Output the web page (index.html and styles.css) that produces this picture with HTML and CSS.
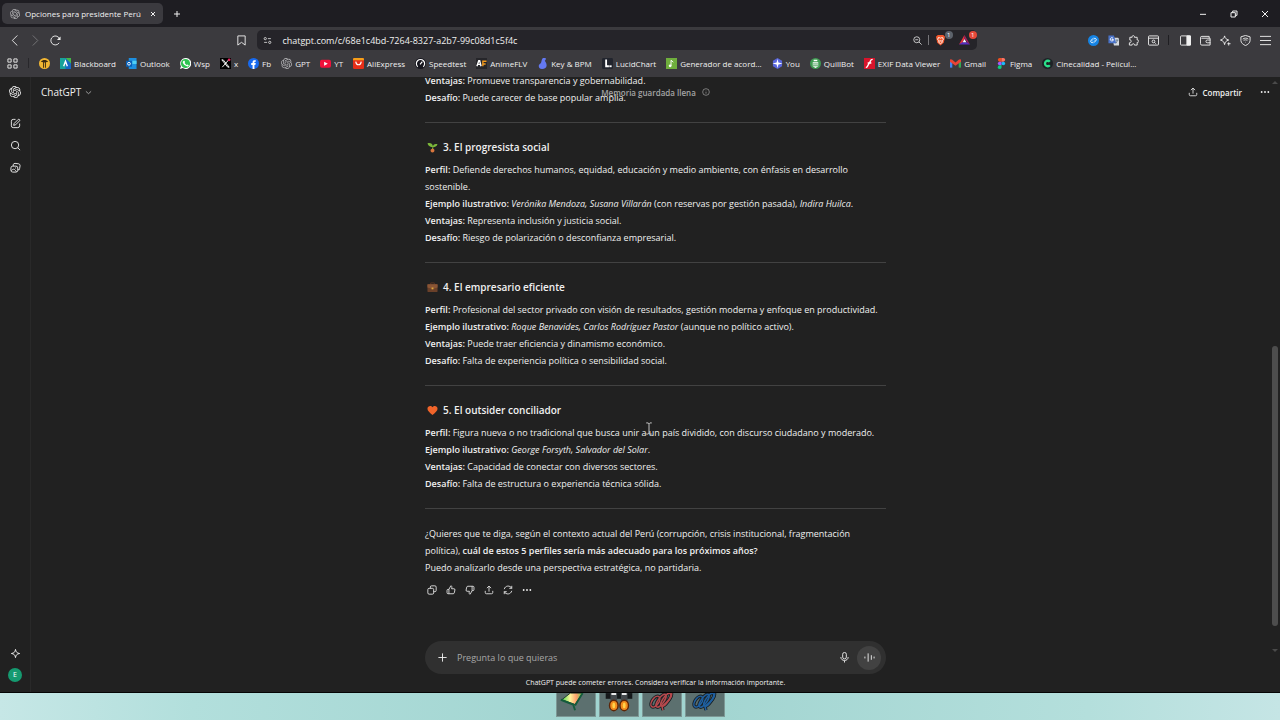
FILE: index.html
```html
<!DOCTYPE html>
<html lang="es">
<head>
    <meta charset="UTF-8">
    <meta name="viewport" content="width=device-width, initial-scale=1.0">
    <title>Opciones para presidente Perú</title>
    <link rel="stylesheet" href="styles.css">
</head>
<body>
    <svg class="defs" aria-hidden="true">
        <symbol id="gpt" viewBox="0 0 24 24">
            <path fill="currentColor" d="M22.2819 9.8211a5.9847 5.9847 0 0 0-.5157-4.9108 6.0462 6.0462 0 0 0-6.5098-2.9A6.0651 6.0651 0 0 0 4.9807 4.1818a5.9847 5.9847 0 0 0-3.9977 2.9 6.0462 6.0462 0 0 0 .7427 7.0966 5.98 5.98 0 0 0 .511 4.9107 6.051 6.051 0 0 0 6.5146 2.9001A5.9847 5.9847 0 0 0 13.2599 24a6.0557 6.0557 0 0 0 5.7718-4.2058 5.9894 5.9894 0 0 0 3.9977-2.9001 6.0557 6.0557 0 0 0-.7475-7.0729zm-9.022 12.6081a4.4755 4.4755 0 0 1-2.8764-1.0408l.1419-.0804 4.7783-2.7582a.7948.7948 0 0 0 .3927-.6813v-6.7369l2.02 1.1686a.071.071 0 0 1 .038.052v5.5826a4.504 4.504 0 0 1-4.4945 4.4944zm-9.6607-4.1254a4.4708 4.4708 0 0 1-.5346-3.0137l.142.0852 4.783 2.7582a.7712.7712 0 0 0 .7806 0l5.8428-3.3685v2.3324a.0804.0804 0 0 1-.0332.0615L9.74 19.9502a4.4992 4.4992 0 0 1-6.1408-1.6464zM2.3408 7.8956a4.485 4.485 0 0 1 2.3655-1.9728V11.6a.7664.7664 0 0 0 .3879.6765l5.8144 3.3543-2.0201 1.1685a.0757.0757 0 0 1-.071 0l-4.8303-2.7865A4.504 4.504 0 0 1 2.3408 7.872zm16.5963 3.8558L13.1038 8.364 15.1192 7.2a.0757.0757 0 0 1 .071 0l4.8303 2.7913a4.4944 4.4944 0 0 1-.6765 8.1042v-5.6772a.79.79 0 0 0-.407-.667zm2.0107-3.0231l-.142-.0852-4.7735-2.7818a.7759.7759 0 0 0-.7854 0L9.409 9.2297V6.8974a.0662.0662 0 0 1 .0284-.0615l4.8303-2.7866a4.4992 4.4992 0 0 1 6.6802 4.66zM8.3065 12.863l-2.02-1.1638a.0804.0804 0 0 1-.038-.0567V6.0742a4.4992 4.4992 0 0 1 7.3757-3.4537l-.142.0805L8.704 5.459a.7948.7948 0 0 0-.3927.6813zm1.0976-2.3654l2.602-1.4998 2.6069 1.4998v2.9994l-2.5974 1.4997-2.6067-1.4997Z"/>
        </symbol>
        <symbol id="share" viewBox="0 0 24 24">
            <path d="M12 16V3M7 7.500l5-5 5 5M3 14v4a3 3 0 0 0 3 3h12a3 3 0 0 0 3-3v-4"/>
        </symbol>
        <symbol id="dots" viewBox="0 0 24 24">
            <g fill="currentColor" stroke="none"><circle cx="4" cy="12" r="2.200"/><circle cx="12" cy="12" r="2.200"/><circle cx="20" cy="12" r="2.200"/></g>
        </symbol>
        <symbol id="thumb" viewBox="0 0 24 24">
            <path d="M7 10.500 11.500 2c2 .2 3 1.500 2.600 3.500L13.400 9H19a2.500 2.500 0 0 1 2.400 3l-1.600 7a2.800 2.800 0 0 1-2.700 2H5a2.500 2.500 0 0 1-2.500-2.500V13A2.500 2.500 0 0 1 5 10.500zM7 10.500V21"/>
        </symbol>
        <symbol id="spring" viewBox="0 0 30 24">
            <g fill="none" stroke="#1b2226" stroke-width="3.500">
                <ellipse cx="8" cy="9" rx="3.500" ry="6.500" transform="rotate(35 8 9)"/>
                <ellipse cx="14" cy="8" rx="3" ry="8" transform="rotate(35 14 8)"/>
                <ellipse cx="19" cy="7" rx="3" ry="8" transform="rotate(35 19 7)"/>
                <path d="M25 0c1 4-3 8-10 14l1 4"/>
            </g>
            <g fill="none" stroke="currentColor" stroke-width="1.600">
                <ellipse cx="8" cy="9" rx="3.500" ry="6.500" transform="rotate(35 8 9)"/>
                <ellipse cx="14" cy="8" rx="3" ry="8" transform="rotate(35 14 8)"/>
                <ellipse cx="19" cy="7" rx="3" ry="8" transform="rotate(35 19 7)"/>
                <path d="M25 0c1 4-3 8-10 14l1 4"/>
            </g>
        </symbol>
    </svg>

    <div class="window">
        <div class="tabs">
            <div class="tab">
                <svg class="tab-icon"><use href="#gpt"/></svg>
                <span class="tab-title">Opciones para presidente Perú</span>
                <button class="tab-close" aria-label="Cerrar pestaña"><svg viewBox="0 0 24 24"><path d="M4 4l16 16M20 4 4 20"/></svg></button>
            </div>
            <button class="new-tab" aria-label="Nueva pestaña"><svg viewBox="0 0 24 24"><path d="M12 3v18M3 12h18"/></svg></button>
            <div class="caption">
                <button aria-label="Minimizar"><svg viewBox="0 0 24 24"><path d="M3 13h18"/></svg></button>
                <button aria-label="Restaurar"><svg viewBox="0 0 24 24"><path d="M3 8h13v13H3zM8 8V3h13v13h-5"/></svg></button>
                <button aria-label="Cerrar"><svg viewBox="0 0 24 24"><path d="M3 3l18 18M21 3 3 21"/></svg></button>
            </div>
        </div>

        <div class="toolbar">
            <button aria-label="Atrás"><svg viewBox="0 0 24 24"><path d="M16 1 5 12l11 11"/></svg></button>
            <button class="off" aria-label="Adelante"><svg viewBox="0 0 24 24"><path d="M6 1l11 11L6 23"/></svg></button>
            <button aria-label="Recargar"><svg viewBox="0 0 24 24"><path d="M20 17a9.800 9.800 0 1 1 1-8"/><path d="M23 3v8h-8z" fill="currentColor" stroke="none"/></svg></button>
            <div class="space-left"></div>
            <button aria-label="Marcador"><svg viewBox="0 0 24 24"><path d="M4 2h16v20l-8-6-8 6z"/></svg></button>
            <div class="address">
                <button aria-label="Información del sitio"><svg viewBox="0 0 24 24"><circle cx="6" cy="7" r="3"/><circle cx="18" cy="17" r="3"/><path d="M13 7h8M3 17h8"/></svg></button>
                <input type="text" aria-label="Dirección" value="chatgpt.com/c/68e1c4bd-7264-8327-a2b7-99c08d1c5f4c">
                <button aria-label="Zoom"><svg viewBox="0 0 24 24"><circle cx="10" cy="10" r="8"/><path d="M16 16l7 7M6 10h8"/></svg></button>
                <i class="bar"></i>
                <button aria-label="Brave Shields">
                    <svg class="big" viewBox="0 0 24 24"><path stroke="none" fill="#f1562b" d="M6 1h12l4 4-1 5-2 8-7 6-7-6L3 10 2 5z"/><path stroke="#fff" d="M7 7h3l2 1 2-1h3l1 4-3 3 1 3-4 3-4-3 1-3-3-3zM10 14h4"/></svg>
                    <span class="badge gray">1</span>
                </button>
                <button aria-label="Brave Rewards">
                    <svg class="big" viewBox="0 0 24 24"><g stroke="none"><path fill="#e8323c" d="M12 1 0 22l7-4 5-9z"/><path fill="#5a2dc0" d="M0 22h24l-6-5H7z"/><path fill="#9e1f63" d="m12 1 12 21-6-5-6-8z"/><path fill="#fff" d="m12 10 4 7H8z"/></g></svg>
                    <span class="badge">1</span>
                </button>
            </div>
            <div class="space-right"></div>
            <button aria-label="Shazam"><svg viewBox="0 0 24 24"><circle cx="12" cy="12" r="12" fill="#1583e3" stroke="none"/><path stroke="#fff" d="M11 16c-2 2-6 0-5-3 0-2 4-4 6-6M13 8c2-2 6 0 5 3 0 2-4 4-6 6M9 12l2 2M13 10l2 2"/></svg></button>
            <button aria-label="Traductor"><svg viewBox="0 0 24 24"><g stroke="none"><path fill="#d5d9de" d="M9 6h13l2 2v15H13z"/><path fill="#4a73c9" d="M1 1h12l5 17H1z"/></g><path stroke="#fff" d="M11 7a3.500 3.500 0 1 0 1 3H8"/><path stroke="#5b7286" d="M17 11h6M20 11c0 3-1 5-3 7"/></svg></button>
            <button aria-label="Extensiones"><svg viewBox="0 0 24 24"><path d="M4 5h5c-1-5 6-5 5 0h6v6c5-1 5 6 0 5v6h-6c1-4-6-4-5 0H3v-5c5 1 5-7 1-6z"/></svg></button>
            <button aria-label="Buscar en la página"><svg viewBox="0 0 24 24"><rect x="1" y="2" width="22" height="20" rx="2"/><path d="M1 7h22"/><circle cx="12" cy="14" r="3"/><path d="m14 16 3 3"/></svg></button>
            <i class="bar wide"></i>
            <button aria-label="Barra lateral"><svg viewBox="0 0 24 24"><rect x="1" y="2" width="22" height="20" rx="2"/><path d="M15 2h8v20h-8z" fill="currentColor"/></svg></button>
            <button aria-label="Cartera"><svg viewBox="0 0 24 24"><path d="M20 7V3H4a3 3 0 0 0-3 3v13a3 3 0 0 0 3 3h18V7H3M23 11h-7a3 3 0 0 0 0 6h7"/></svg></button>
            <button aria-label="Leo"><svg viewBox="0 0 24 24"><path d="M10 2c1 5 3 7 9 9-6 2-8 4-9 10-1-6-3-8-9-10 6-2 8-4 9-9z"/><path d="M19 16v7M16 19h7"/></svg></button>
            <button aria-label="VPN"><svg viewBox="0 0 24 24"><path d="M12 1 2 4v8c0 5 5 9 10 11 5-2 10-6 10-11V4zM6 9c4-3 8-3 12 0M8 12c3-2 5-2 8 0M12 15v1"/></svg></button>
            <button aria-label="Menú"><svg viewBox="0 0 24 24"><path d="M0 3h24M0 12h24M0 21h24"/></svg></button>
        </div>

        <nav class="bookmarks">
            <button class="apps" aria-label="Aplicaciones"><svg viewBox="0 0 24 24"><path d="M2 2h7v7H2zM15 2h7v7h-7zM2 15h7v7H2zM15 15h7v7h-7z"/></svg></button>
            <i class="bar"></i>
            <a href="#" aria-label="Marcador"><svg viewBox="0 0 24 24"><circle cx="12" cy="12" r="12" fill="#f2b632"/><path fill="#3a2a12" d="M4 8c4-5 12-5 16 0l-5 1v12h-2V10h-2v11H9V9z"/></svg></a>
            <a href="#"><svg viewBox="0 0 24 24"><path fill="#1568c4" d="M0 0h24v24H0z"/><path fill="#43b649" d="M0 0h24v12L12 0z"/><path fill="#17a39a" d="M0 0h12v24H0z"/><path fill="none" stroke="#fff" stroke-width="3" d="m8 18 4-11 4 11"/></svg>Blackboard</a>
            <a href="#"><svg viewBox="0 0 24 24"><path fill="#1d8fe0" d="M6 0h17v24H6z"/><path fill="#50d0f5" d="M14 6h9v7h-9z"/><path fill="#0a5fb4" d="M0 6h13v13H0z"/><circle cx="6.500" cy="12.500" r="3" fill="none" stroke="#fff" stroke-width="2"/></svg>Outlook</a>
            <a href="#"><svg viewBox="0 0 24 24"><path fill="#fff" d="M12 0a12 12 0 1 1-6 22l-6 2 2-6A12 12 0 0 1 12 0z"/><circle cx="12" cy="12" r="10" fill="#2fc351"/><path fill="#fff" d="m8 6 2 0 1 3-1 2 4 4 2-1 3 2c0 2-2 3-4 2-5-1-8-5-9-8 0-2 1-3 2-4z"/></svg>Wsp</a>
            <a href="#"><svg viewBox="0 0 24 24"><path fill="#000" d="M0 0h24v24H0z"/><path fill="none" stroke="#fff" stroke-width="2" d="M4 4h3l13 16h-3zM19 4 5 20"/><circle cx="20" cy="4" r="3" fill="#e0245e"/></svg>x</a>
            <a href="#"><svg viewBox="0 0 24 24"><circle cx="12" cy="12" r="12" fill="#1769ee"/><path fill="#fff" d="M10 24v-9H7v-4h3V9c0-4 3-5 7-4v3c-3 0-3 0-3 3h3l-1 4h-2v9z"/></svg>Fb</a>
            <a href="#"><svg class="dim"><use href="#gpt"/></svg>GPT</a>
            <a href="#"><svg viewBox="0 0 24 24"><rect y="4" width="24" height="17" rx="4" fill="#f0113b"/><path fill="#fff" d="m9 8 8 4.500L9 17z"/></svg>YT</a>
            <a href="#"><svg viewBox="0 0 24 24"><rect width="24" height="24" rx="3" fill="#e62e18"/><path fill="#f6a01a" d="M0 3a3 3 0 0 1 3-3h18a3 3 0 0 1 3 3v2H0z"/><path fill="none" stroke="#fff" stroke-width="2.500" d="M6 8c1 9 11 9 12 0"/></svg>AliExpress</a>
            <a href="#"><svg viewBox="0 0 24 24"><circle cx="12" cy="12" r="12" fill="#17171f"/><path fill="none" stroke="#fff" stroke-width="2.500" d="M6 19a9 9 0 1 1 12 0M11 14l5-6"/></svg>Speedtest</a>
            <a href="#"><svg viewBox="0 0 24 24"><path fill="#26262a" d="M0 0h24v24H0z"/><path fill="none" stroke="#fff" stroke-width="3" d="m2 18 4-12h2l3 12M4 14h6"/><path fill="none" stroke="#f39a1e" stroke-width="3" d="M15 18V7h8M15 13h6"/></svg>AnimeFLV</a>
            <a href="#"><svg viewBox="0 0 24 24"><path fill="#6479f2" d="M13 0h6v4l-2 2c1 2 4 5 4 10 0 6-4 8-10 8-5 0-8-3-7-8 1-3 4-3 5-6s1-7 4-10z"/></svg>Key &amp; BPM</a>
            <a href="#"><svg viewBox="0 0 24 24"><rect width="24" height="24" rx="3" fill="#22252e"/><path fill="none" stroke="#fff" stroke-width="4" d="M9 3v15h6"/><path fill="#fff" d="M16 16h5v4h-5z"/></svg>LucidChart</a>
            <a href="#"><svg viewBox="0 0 24 24"><path fill="#6fae3d" d="M0 0h24v24H0z"/><circle cx="9" cy="17" r="3" fill="#fff"/><path fill="none" stroke="#fff" stroke-width="2" d="M11 17V5l5 4"/></svg>Generador de acord...</a>
            <a href="#"><svg viewBox="0 0 24 24"><path fill="#5a67dc" d="m12 0 10 6v12l-10 6-10-6V6z"/><path fill="#fff" d="m12 2 2 8 9 2-9 2-2 8-2-8-9-2 9-2z"/></svg>You</a>
            <a href="#"><svg viewBox="0 0 24 24"><circle cx="12" cy="12" r="12" fill="#3f9b52"/><path fill="#fff" d="M6 9h12v9l-6 4-6-4zM8 4h8v3H8z"/><path stroke="#3f9b52" stroke-width="2" d="M6 13h12M6 17h12"/></svg>QuillBot</a>
            <a href="#"><svg viewBox="0 0 24 24"><path fill="#d9142b" d="M0 0h24v24H0z"/><path fill="none" stroke="#fff" stroke-width="3" d="M19 3c-6 0-4 4-8 9s-2 8-7 9M8 11h8"/></svg>EXIF Data Viewer</a>
            <a href="#"><svg viewBox="0 0 24 24"><path fill="#4285f4" d="M0 5h5v16H0z"/><path fill="#34a853" d="M19 5h5v16h-5z"/><path fill="#ea4335" d="M0 5c0-3 3-3 5-1l7 6 7-6c2-2 5-2 5 1v3l-12 9L0 8z"/></svg>Gmail</a>
            <a href="#"><svg viewBox="0 0 24 24"><path fill="#f24e1e" d="M12 0v8H8a4 4 0 0 1 0-8z"/><path fill="#ff7262" d="M12 0h4a4 4 0 0 1 0 8h-4z"/><path fill="#a259ff" d="M12 8v8H8a4 4 0 0 1 0-8z"/><circle cx="16" cy="12" r="4" fill="#1abcfe"/><path fill="#0acf83" d="M8 16h4v4a4 4 0 1 1-4-4z"/></svg>Figma</a>
            <a href="#"><svg viewBox="0 0 24 24"><circle cx="12" cy="12" r="12" fill="#1d2226"/><path fill="none" stroke="#2be08a" stroke-width="5" d="M17 8a6 6 0 1 0 0 8"/></svg>Cinecalidad - Películ...</a>
        </nav>

        <div class="page">
            <aside class="sidebar">
                <button class="logo" aria-label="Inicio"><svg><use href="#gpt"/></svg></button>
                <button aria-label="Nuevo chat"><svg viewBox="0 0 24 24"><path d="M12 3H7a4 4 0 0 0-4 4v10a4 4 0 0 0 4 4h10a4 4 0 0 0 4-4v-5M9 12l9-9c2-1 4 1 3 3l-9 9-4 1z"/></svg></button>
                <button aria-label="Buscar chats"><svg viewBox="0 0 24 24"><circle cx="11" cy="11" r="8"/><path d="m17 17 5 5"/></svg></button>
                <button aria-label="Biblioteca"><svg viewBox="0 0 24 24"><rect x="2" y="9" width="15" height="13" rx="4"/><path d="M7 9V6a4 4 0 0 1 4-3l8 1a4 4 0 0 1 3 4l-1 6a3 3 0 0 1-4 3M3 19c4-5 7-4 11 2M11 13h2"/></svg></button>
                <button class="upgrade" aria-label="Mejorar plan"><svg viewBox="0 0 24 24"><path d="M12 3c1 6 3 8 9 9-6 1-8 3-9 9-1-6-3-8-9-9 6-1 8-3 9-9z"/></svg></button>
                <button aria-label="Perfil"><span class="avatar">E</span></button>
            </aside>

            <main>
                <header>
                    <button class="model">ChatGPT <svg viewBox="0 0 24 24"><path d="m3 8 9 8 9-8"/></svg></button>
                    <div class="memory">Memoria guardada llena <svg viewBox="0 0 24 24"><circle cx="12" cy="12" r="10"/><path d="M12 11v6M12 7v1"/></svg></div>
                    <div class="header-actions">
                        <button class="share"><svg><use href="#share"/></svg>Compartir</button>
                        <button aria-label="Más opciones"><svg><use href="#dots"/></svg></button>
                    </div>
                </header>

                <div class="thread">
                    <article>
                        <p><strong>Ventajas:</strong> Promueve transparencia y gobernabilidad.<br>
                        <strong>Desafío:</strong> Puede carecer de base popular amplia.</p>
                        <hr>
                        <h3><svg viewBox="0 0 24 24"><path fill="#7cb83a" d="M12 11C8 11 3 9 1 3c6-2 11 1 12 6 1-4 5-6 10-4-2 5-6 6-9 6l-1 7h-3z"/><path fill="#d9763d" d="M8 17c2-3 7-3 8 0s-1 6-4 6-5-3-4-6z"/></svg>3. El progresista social</h3>
                        <p><strong>Perfil:</strong> Defiende derechos humanos, equidad, educación y medio ambiente, con énfasis en desarrollo sostenible.<br>
                        <strong>Ejemplo ilustrativo:</strong> <em>Verónika Mendoza, Susana Villarán</em> (con reservas por gestión pasada), <em>Indira Huilca</em>.<br>
                        <strong>Ventajas:</strong> Representa inclusión y justicia social.<br>
                        <strong>Desafío:</strong> Riesgo de polarización o desconfianza empresarial.</p>
                        <hr>
                        <h3><svg viewBox="0 0 24 24"><path fill="none" stroke="#5a3524" stroke-width="2" d="M8 6V2h8v4"/><rect x="1" y="5" width="22" height="17" rx="2" fill="#6a4029"/><path fill="#8a5535" d="M1 5h22v7l-11 3-11-3z"/><path fill="#e0a93a" d="M10 12h4v4h-4z"/></svg>4. El empresario eficiente</h3>
                        <p><strong>Perfil:</strong> Profesional del sector privado con visión de resultados, gestión moderna y enfoque en productividad.<br>
                        <strong>Ejemplo ilustrativo:</strong> <em>Roque Benavides, Carlos Rodríguez Pastor</em> (aunque no político activo).<br>
                        <strong>Ventajas:</strong> Puede traer eficiencia y dinamismo económico.<br>
                        <strong>Desafío:</strong> Falta de experiencia política o sensibilidad social.</p>
                        <hr>
                        <h3><svg viewBox="0 0 24 24"><path fill="#f0642a" d="M12 22C5 16 1 12 1 8c0-6 8-8 11-3 3-5 11-3 11 3 0 4-4 8-11 14z"/></svg>5. El outsider conciliador</h3>
                        <p><strong>Perfil:</strong> Figura nueva o no tradicional que busca unir a un país dividido, con discurso ciudadano y moderado.<br>
                        <strong>Ejemplo ilustrativo:</strong> <em>George Forsyth, Salvador del Solar</em>.<br>
                        <strong>Ventajas:</strong> Capacidad de conectar con diversos sectores.<br>
                        <strong>Desafío:</strong> Falta de estructura o experiencia técnica sólida.</p>
                        <hr>
                        <p>¿Quieres que te diga, según el contexto actual del Perú (corrupción, crisis institucional, fragmentación política), <strong>cuál de estos 5 perfiles sería más adecuado para los próximos años?</strong><br>
                        Puedo analizarlo desde una perspectiva estratégica, no partidaria.</p>
                        <div class="actions">
                            <button aria-label="Copiar"><svg viewBox="0 0 24 24"><rect x="2" y="8" width="14" height="14" rx="3"/><path d="M8 8V5a3 3 0 0 1 3-3h8a3 3 0 0 1 3 3v8a3 3 0 0 1-3 3h-3"/></svg></button>
                            <button aria-label="Buena respuesta"><svg><use href="#thumb"/></svg></button>
                            <button class="down" aria-label="Mala respuesta"><svg><use href="#thumb"/></svg></button>
                            <button aria-label="Compartir"><svg><use href="#share"/></svg></button>
                            <button aria-label="Reintentar"><svg viewBox="0 0 24 24"><path d="M3 10c2-9 14-10 18-2M21 2v6h-6M21 14c-2 9-14 10-18 2M3 22v-6h6"/></svg></button>
                            <button aria-label="Más"><svg><use href="#dots"/></svg></button>
                        </div>
                    </article>
                </div>

                <form class="composer">
                    <button type="button" aria-label="Agregar"><svg viewBox="0 0 24 24"><path d="M12 3v18M3 12h18"/></svg></button>
                    <input type="text" aria-label="Mensaje" placeholder="Pregunta lo que quieras">
                    <button type="button" aria-label="Dictar"><svg viewBox="0 0 24 24"><rect x="8" y="1" width="8" height="14" rx="4"/><path d="M4 11c0 10 16 10 16 0M12 19v4"/></svg></button>
                    <button type="button" class="voice" aria-label="Modo de voz"><svg viewBox="0 0 24 24"><path d="M2 10v4M9 3v18M16 7v10M22 10v4"/></svg></button>
                </form>
                <p class="note">ChatGPT puede cometer errores. Considera verificar la información importante.</p>

                <div class="scrollbar">
                    <i class="arrow up"></i>
                    <i class="handle"></i>
                    <i class="arrow"></i>
                </div>
                <svg class="cursor" viewBox="0 0 8 14"><path d="M1 1h2l1 1 1-1h2M4 2v10M1 13h2l1-1 1 1h2"/></svg>
            </main>
        </div>
    </div>

    <!-- juego detrás de la ventana -->
    <div class="desktop">
        <div class="slot"><svg viewBox="0 0 40 24">
            <defs><linearGradient id="kite"><stop offset="0" stop-color="#3fdc4a"/><stop offset="0.400" stop-color="#fff59a"/><stop offset="0.700" stop-color="#ff9e6b"/><stop offset="1" stop-color="#58d64c"/></linearGradient></defs>
            <path fill="url(#kite)" stroke="#20352d" stroke-width="1" d="M14 0h13l-8 12-14-5z"/>
            <path fill="none" stroke="#155c3c" stroke-width="2" d="M4 7l13 5 2 6M27 0l-8 13"/>
        </svg></div>
        <div class="slot"><svg viewBox="0 0 40 24">
            <path fill="#15181a" d="M6 0h28v6H6z"/><path fill="#42474a" d="M11 0h7v8h-7zM22 0h7v8h-7z"/><path fill="#e8e8e8" d="M12 0h5v2h-5zM23 0h5v2h-5z"/>
            <g fill="#f28b1c" stroke="#5c2508" stroke-width="1.500"><ellipse cx="14.500" cy="13" rx="4.500" ry="5.500"/><ellipse cx="25.500" cy="13" rx="4.500" ry="5.500"/></g>
            <g fill="#ffd34a"><ellipse cx="14.500" cy="13" rx="1.500" ry="3"/><ellipse cx="25.500" cy="13" rx="1.500" ry="3"/></g>
        </svg></div>
        <div class="slot red"><svg viewBox="-5 0 40 24"><use href="#spring" width="30" height="24"/></svg></div>
        <div class="slot blue"><svg viewBox="-5 0 40 24"><use href="#spring" width="30" height="24"/></svg></div>
    </div>
</body>
</html>
```
FILE: styles.css
```css
* {
    box-sizing: border-box;
}
body {
    font-family: "Segoe UI", "Open Sans", "Noto Sans", sans-serif;
    font-size: 9px;
    color: #f0f0f0;
    background: linear-gradient(90deg, #c6e7e6, #b2dfdc 15%, #9fd3cf 50%, #b4dfdc 85%, #c5e5e5);
    margin: 0;
    height: 100vh;
    display: flex;
    flex-direction: column;
    overflow: hidden;
}
svg {
    display: block;
    flex: none;
    width: 11px;
    height: 11px;
    fill: none;
}
button {
    display: flex;
    align-items: center;
    justify-content: center;
    flex: none;
    padding: 0;
    border: none;
    background: none;
    color: inherit;
    font: inherit;
    cursor: pointer;
}
button svg, .memory svg {
    stroke: currentColor;
    stroke-width: 2;
}
input {
    flex: 1;
    min-width: 0;
    padding: 0;
    border: none;
    outline: none;
    background: none;
    color: inherit;
    font: inherit;
}
.defs {
    position: absolute;
    width: 0;
    height: 0;
}
.window {
    flex: 1;
    min-height: 0;
    display: flex;
    flex-direction: column;
    background: #212121;
    border-bottom: 1px solid #050505;
}

/* browser */
.tabs {
    display: flex;
    align-items: center;
    height: 27px;
    padding-left: 2px;
    background: #1e1d22;
}
.tab {
    display: flex;
    align-items: center;
    width: 161px;
    height: 21px;
    padding: 0 4px 0 8px;
    gap: 5px;
    border-radius: 5px;
    background: #3b3a3f;
    font-size: 8px;
}
.tab-icon {
    width: 10px;
    height: 10px;
    color: #b5b5b8;
}
.tab-title {
    flex: 1;
    white-space: nowrap;
}
.tab-close {
    width: 13px;
    height: 13px;
}
.tab-close svg {
    width: 6px;
    height: 6px;
    stroke-width: 4;
}
.new-tab {
    width: 28px;
    height: 20px;
}
.new-tab svg {
    width: 8px;
    height: 8px;
    stroke-width: 3;
}
.caption {
    display: flex;
    margin-left: auto;
}
.caption button {
    width: 31px;
    height: 26px;
}
.caption svg {
    width: 8px;
    height: 8px;
    stroke-width: 3;
}
.toolbar {
    display: flex;
    align-items: center;
    height: 26px;
    padding: 0 5px;
    background: #3b3a3e;
}
.toolbar button {
    position: relative;
    width: 20px;
    height: 20px;
}
.toolbar .off {
    color: #78777b;
}
.space-left {
    width: 13vw;
}
.space-right {
    width: 8vw;
}
.address {
    flex: 1;
    display: flex;
    align-items: center;
    height: 20px;
    margin: 0 4px 0 6px;
    border-radius: 5px;
    background: #252429;
}
.address input {
    margin-left: 5px;
}
.toolbar .address svg {
    width: 9px;
    height: 9px;
}
.toolbar .address .big {
    width: 11px;
    height: 12px;
}
.address button:nth-last-child(-n+2) {
    width: 24px;
}
.bar {
    width: 1px;
    height: 10px;
    background: #77767a;
}
.bar.wide {
    margin: 0 6px 0 5px;
    background: #1f1e22;
}
.badge {
    position: absolute;
    top: 1px;
    right: 0;
    width: 8px;
    height: 8px;
    border-radius: 4px;
    background: #e5493a;
    color: #fff;
    font-size: 6px;
    line-height: 8px;
    text-align: center;
}
.badge.gray {
    background: #5c626b;
}
.bookmarks {
    display: flex;
    align-items: center;
    height: 24px;
    padding: 0 0 4px 7px;
    gap: 10px;
    background: #3b3a3e;
    font-size: 8px;
    white-space: nowrap;
}
.bookmarks a {
    display: flex;
    align-items: center;
    gap: 3px;
    color: inherit;
    text-decoration: none;
}
.bookmarks .dim {
    color: #b5b5b8;
}
.bookmarks .bar {
    background: #28272b;
}

/* chat */
.page {
    flex: 1;
    min-height: 0;
    display: flex;
}
.sidebar {
    display: flex;
    flex-direction: column;
    width: 31px;
    padding-bottom: 6px;
    border-right: 1px solid #292929;
}
.sidebar button {
    height: 22px;
}
.sidebar .logo {
    height: 30px;
    margin-bottom: 5px;
}
.sidebar .logo svg {
    width: 12px;
    height: 12px;
    stroke: none;
}
.sidebar .upgrade {
    margin-top: auto;
}
.avatar {
    width: 14px;
    height: 14px;
    border-radius: 50%;
    background: #159a70;
    color: #fff;
    font-size: 7px;
    line-height: 14px;
    text-align: center;
}
main {
    position: relative;
    flex: 1;
    min-width: 0;
    display: flex;
    flex-direction: column;
}
header {
    position: absolute;
    top: 0;
    left: 0;
    right: 0;
    display: grid;
    grid-template-columns: 1fr auto 1fr;
    align-items: center;
    height: 30px;
    padding: 0 10px;
}
.model {
    justify-self: start;
    gap: 4px;
    font-size: 10px;
}
.model svg {
    width: 7px;
    height: 7px;
}
.memory {
    display: flex;
    align-items: center;
    gap: 6px;
    color: #a5a5a5;
    font-size: 8px;
    font-weight: 600;
}
.memory svg {
    width: 8px;
    height: 8px;
}
.header-actions {
    display: flex;
    justify-content: flex-end;
    gap: 18px;
}
.share {
    gap: 4px;
    font-size: 8px;
    font-weight: 600;
}
.header-actions svg {
    width: 10px;
    height: 10px;
}
.thread {
    flex: 1;
    min-height: 0;
    display: flex;
    flex-direction: column;
    justify-content: flex-end;
    overflow: hidden;
    padding-bottom: 41px;
}
article, .composer {
    width: 461px;
    max-width: 100%;
    margin: 0 auto;
}
article p {
    margin: 0;
    line-height: 17px;
}
article hr {
    height: 1px;
    margin: 16px 0;
    border: none;
    background: #424242;
}
h3 {
    display: flex;
    align-items: center;
    gap: 5px;
    margin: 0 0 5px;
    padding-left: 2px;
    font-size: 10px;
    font-weight: 600;
    line-height: 17px;
}
strong {
    font-weight: 600;
}
.actions {
    display: flex;
    margin: 4px 0 0 -3px;
}
.actions button {
    width: 19px;
    height: 20px;
}
.actions svg {
    width: 10px;
    height: 10px;
}
.actions .down svg {
    transform: rotate(180deg);
}
.composer {
    display: flex;
    align-items: center;
    height: 33px;
    padding: 0 5px 0 7px;
    border-radius: 17px;
    background: #303030;
}
.composer button {
    width: 20px;
    height: 24px;
}
.composer input {
    margin-left: 5px;
}
.composer input::placeholder {
    color: #a8a8a8;
    opacity: 1;
}
.composer .voice {
    width: 24px;
    margin-left: 3px;
    border-radius: 50%;
    background: #424242;
}
.note {
    margin: 0;
    font-size: 7px;
    line-height: 18px;
    text-align: center;
}
.scrollbar {
    position: absolute;
    top: 0;
    right: 0;
    bottom: 36px;
    display: flex;
    flex-direction: column;
    align-items: center;
    width: 10px;
    padding: 4px 0;
}
.arrow {
    border: 3px solid transparent;
    border-top-color: #4a4a4a;
    border-bottom: none;
}
.arrow.up {
    border-top: none;
    border-bottom: 3px solid #4a4a4a;
}
.handle {
    width: 6px;
    height: 280px;
    margin: auto 0 23px;
    border-radius: 3px;
    background: #4d4d4d;
}
.cursor {
    position: absolute;
    left: 614px;
    top: 345px;
    width: 8px;
    height: 13px;
    stroke: #d0d0d0;
}

/* game hotbar */
.desktop {
    display: flex;
    justify-content: center;
    gap: 3px;
    height: 27px;
}
.slot {
    width: 40px;
    height: 24px;
    border: 1px solid #7d9795;
    border-top: none;
    background: #5c706f;
}
.slot svg {
    width: 38px;
    height: 23px;
}
.red {
    color: #b5494d;
}
.blue {
    color: #1f5f9f;
}
```
